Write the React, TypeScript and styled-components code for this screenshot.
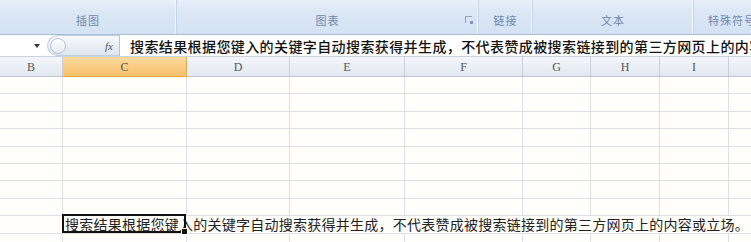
import React from "react";
import styled, { createGlobalStyle } from "styled-components";

const Global = createGlobalStyle`
  html, body { margin: 0; padding: 0; background: #ffffff; overflow: hidden; }
  body { width: 751px; height: 242px; font-family: "Noto Sans CJK SC", "Liberation Sans", sans-serif; }
`;

const Page = styled.div`
  width: 751px;
  height: 242px;
  display: flex;
  flex-direction: column;
  overflow: hidden;
`;

const Ribbon = styled.div`
  height: 35px;
  display: flex;
  background: linear-gradient(#e9f0fa 0%, #dde8f6 30%, #d3e1f3 100%);
  border-bottom: 1px solid #a9bdd8;
  box-sizing: border-box;
  flex: none;
`;

const Group = styled.div<{ $w: number; $start?: boolean }>`
  width: ${(p) => p.$w}px;
  flex: none;
  position: relative;
  display: flex;
  align-items: center;
  justify-content: ${(p) => (p.$start ? "flex-start" : "center")};
  padding-left: ${(p) => (p.$start ? "14px" : "0")};
  padding-top: 6px;
  box-sizing: border-box;
  border-right: 1px solid #c3d3e8;
  box-shadow: inset -1px 0 0 #f3f7fd;
  font-size: 11px;
  color: #6e86ae;
  letter-spacing: 1px;
  white-space: nowrap;
`;

const Launcher = styled.span`
  position: absolute;
  right: 6px;
  top: 16px;
  width: 6px;
  height: 6px;
  border-top: 1px solid #8ea3c2;
  border-left: 1px solid #8ea3c2;
  &::after {
    content: "";
    position: absolute;
    right: -1px;
    bottom: -1px;
    width: 3px;
    height: 3px;
    background: #7f96ba;
  }
`;

const FormulaBar = styled.div`
  height: 22px;
  display: flex;
  flex: none;
  background: #ffffff;
  border-bottom: 1px solid #c9d3e0;
  box-sizing: border-box;
`;

const NameBox = styled.div`
  width: 47px;
  flex: none;
  display: flex;
  align-items: center;
  justify-content: flex-end;
  padding-right: 7px;
  box-sizing: border-box;
  background: #ffffff;
`;

const Arrow = styled.span`
  width: 0;
  height: 0;
  border-left: 3px solid transparent;
  border-right: 3px solid transparent;
  border-top: 4px solid #333;
`;

const FxArea = styled.div`
  width: 72px;
  flex: none;
  display: flex;
  align-items: center;
  justify-content: space-between;
  padding: 0 6px 0 0;
  box-sizing: border-box;
  border-radius: 11px 0 0 11px;
  background: linear-gradient(#f6f8fb, #dfe6ef);
  border: 1px solid #c5cfdc;
  border-right: none;
`;

const Knob = styled.span`
  width: 14px;
  height: 14px;
  border-radius: 50%;
  border: 1px solid #b8c4d4;
  background: linear-gradient(#ffffff, #e4eaf2);
  margin-left: 2px;
`;

const Fx = styled.span`
  font-family: "Liberation Serif", serif;
  font-style: italic;
  font-size: 11px;
  color: #555;
`;

const FormulaInput = styled.div`
  flex: 1;
  display: flex;
  align-items: center;
  padding-left: 10px;
  white-space: nowrap;
  overflow: hidden;
  font-size: 14px;
  font-weight: 500;
  letter-spacing: 0.4px;
  color: #111;
  border-left: 1px solid #b9c4d2;
`;

const COLS = "63px 124px 103px 115px 118px 68px 69px 69px 40px";

const Sheet = styled.div`
  flex: 1;
  display: grid;
  grid-template-columns: ${COLS};
  grid-template-rows: 20px;
  grid-auto-rows: 17.4px;
  background: #fffefb;
`;

const Head = styled.div<{ $sel?: boolean }>`
  display: flex;
  align-items: center;
  justify-content: center;
  padding-top: 2px;
  font-family: "Liberation Serif", serif;
  font-size: 12px;
  color: #555;
  border-right: 1px solid ${(p) => (p.$sel ? "#e0a94f" : "#c6cfdb")};
  border-bottom: 1px solid ${(p) => (p.$sel ? "#e9a640" : "#bcc6d3")};
  background: ${(p) =>
    p.$sel
      ? "linear-gradient(#fbd99e, #f6c06a)"
      : "linear-gradient(#f4f6fa, #e2e8f0)"};
  box-sizing: border-box;
`;

const Cell = styled.div`
  border-right: 1px solid #dcdfe3;
  border-bottom: 1px solid #dcdfe3;
  box-sizing: border-box;
`;

const TextRow = styled.div`
  grid-column: 2 / -1;
  position: relative;
  border-bottom: 1px solid #dcdfe3;
  box-sizing: border-box;
  display: flex;
  align-items: center;
  padding-left: 2px;
  white-space: nowrap;
  font-size: 14px;
  letter-spacing: 0.25px;
  color: #222;
  overflow: visible;
`;

const SelBox = styled.div`
  position: absolute;
  left: -1px;
  top: -2px;
  width: 124px;
  height: 19px;
  border: 2px solid #111;
  box-sizing: border-box;
  pointer-events: none;
  &::after {
    content: "";
    position: absolute;
    right: -4px;
    bottom: -4px;
    width: 5px;
    height: 5px;
    background: #111;
    border: 1px solid #fff;
  }
`;

const letters = ["B", "C", "D", "E", "F", "G", "H", "I", ""];
const TEXT =
  "搜索结果根据您键入的关键字自动搜索获得并生成，不代表赞成被搜索链接到的第三方网页上的内容或立场。";

export default function App() {
  const rows = 10;
  const cells: React.ReactNode[] = [];
  for (let r = 0; r < rows; r++) {
    if (r === 8) {
      cells.push(<Cell key={`r${r}b`} />);
      cells.push(
        <TextRow key={`r${r}t`}>
          <SelBox />
          {TEXT}
        </TextRow>
      );
      continue;
    }
    letters.forEach((_, c) => cells.push(<Cell key={`r${r}c${c}`} />));
  }
  return (
    <Page>
      <Global />
      <Ribbon>
        <Group $w={177}>插图</Group>
        <Group $w={302}>
          图表
          <Launcher />
        </Group>
        <Group $w={54}>链接</Group>
        <Group $w={161}>文本</Group>
        <Group $w={120} $start>
          特殊符号
        </Group>
      </Ribbon>
      <FormulaBar>
        <NameBox>
          <Arrow />
        </NameBox>
        <FxArea>
          <Knob />
          <Fx>fx</Fx>
        </FxArea>
        <FormulaInput>{TEXT}</FormulaInput>
      </FormulaBar>
      <Sheet>
        {letters.map((l, i) => (
          <Head key={i} $sel={l === "C"}>
            {l}
          </Head>
        ))}
        {cells}
      </Sheet>
    </Page>
  );
}
